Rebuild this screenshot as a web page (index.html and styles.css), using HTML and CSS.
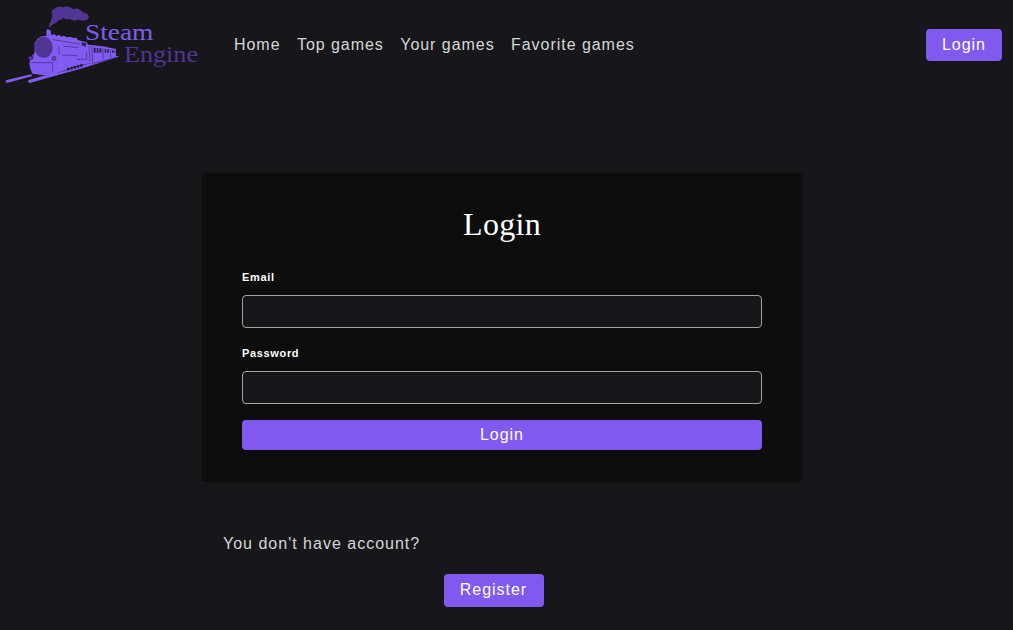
FILE: index.html
```html
<!DOCTYPE html>
<html lang="en">
<head>
<meta charset="utf-8">
<title>Steam Engine - Login</title>
<link rel="stylesheet" href="styles.css">
</head>
<body>
<header class="header">
  <a class="logo" href="#" aria-label="Steam Engine">
    <svg width="210" height="90" viewBox="0 0 630 270">
      <path class="dark" d="M147 83L148 72L153 62L157 45L154 38L158 29L168 23L177 20L190 22L198 19L211 22L220 28L230 25L240 29L250 37L262 42L267 50L261 59L249 62L235 59L222 62L211 57L198 58L190 54L184 59L176 60L169 68L159 73Z"/>
      <path class="light" d="M17 241L93 223L98 228L34 245L19 249ZM84 241L130 227L163 222L240 198L356 167L356 170L250 204L150 232L87 250Z"/>
      <path class="light" d="M88 191L90 181L98 178L97 165L104 159L104 130L112 116L125 109L139 108V91L142 88L152 91L154 106L163 102L169 108L177 104L184 110L192 107L200 112L211 110L220 114L230 113L233 120L246 123L259 127L265 134L308 139L348 147V172L320 179L275 190L246 194L204 207L165 222L150 228L97 221L91 206Z"/>
      <ellipse class="dark" cx="131" cy="142" rx="27" ry="32"/>
      <path class="detail" d="M158 119L240 132M177 140V165M187 165L232 167M190 139L235 142M260 157V178H230M267 139L270 186M94 188H158V193M158 194V217M101 164L98 180M275 139L278 185M309 145V178M332 148V173"/>
      <circle class="lamp" cx="162" cy="175" r="6"/>
      <circle class="lamp" cx="91" cy="174" r="5"/>
      <path class="cut" d="M245 127L258 130V140L245 136ZM281 143H287V158H281ZM290 144H295V158H290ZM298 145H304V158H298ZM314 147H319V158H314ZM322 148H327V158H322ZM336 150H340V159H336ZM343 151H346V159H343Z"/>
      <path class="wheels" d="M202 208L247 196"/>
      <path class="undercarriage" d="M275 191L348 173"/>
      <text class="word light" x="255" y="119" textLength="205" lengthAdjust="spacingAndGlyphs">Steam</text>
      <text class="word dark" x="372" y="186" textLength="222" lengthAdjust="spacingAndGlyphs">Engine</text>
    </svg>
  </a>
  <nav class="nav">
    <a href="#">Home</a>
    <a href="#">Top games</a>
    <a href="#">Your games</a>
    <a href="#">Favorite games</a>
  </nav>
  <a class="button header-login" href="#">Login</a>
</header>
<main class="main">
  <form class="card">
    <h1 class="title">Login</h1>
    <label class="label" for="email">Email</label>
    <input class="input" id="email" type="email">
    <label class="label" for="password">Password</label>
    <input class="input" id="password" type="password">
    <button class="button submit" type="button">Login</button>
  </form>
  <section class="signup">
    <p class="question">You don't have account?</p>
    <a class="button register" href="#">Register</a>
  </section>
</main>
</body>
</html>
```
FILE: styles.css
```css
* { box-sizing: border-box; }
body {
  margin: 0;
  background: #17161a;
  color: #d6d6d6;
  font: 16px/20px "Liberation Sans", Arial, sans-serif;
  letter-spacing: 0.96px;
}
a { color: inherit; text-decoration: none; }
.header { display: flex; align-items: center; height: 90px; padding-right: 11px; }
.logo { width: 210px; height: 90px; }
.logo svg { display: block; }
.light { fill: #825cf0; }
.dark { fill: #503594; }
.detail { fill: none; stroke: #4a3290; stroke-width: 2.5; }
.lamp { fill: #6546bd; stroke: #38266b; stroke-width: 2; }
.cut { fill: #2f2258; }
.wheels { fill: none; stroke: #241b3d; stroke-width: 8; stroke-dasharray: 7 3; }
.undercarriage { fill: none; stroke: #38266b; stroke-width: 2; }
.word { font: 72px "Liberation Serif", serif; letter-spacing: 0; }
.nav { display: flex; gap: 16.4px; padding-left: 24px; }
.button {
  display: block;
  border: 0;
  border-radius: 4px;
  background: #805aef;
  color: #fff;
  font: inherit;
  letter-spacing: 0.96px;
  text-align: center;
}
.header-login { width: 76px; height: 32px; margin-left: auto; padding-top: 6px; }
.main { padding-top: 83px; }
.card {
  display: flex;
  flex-direction: column;
  width: 600px;
  height: 309px;
  margin-left: 202px;
  padding: 31px 40px 32px;
  border-radius: 4px;
  background: #0d0d0e;
  box-shadow: 0 0 4px #141416;
}
.title {
  margin: 0 0 24px;
  color: #fff;
  font: 32px/40px "Liberation Serif", serif;
  letter-spacing: 0.3px;
  text-align: center;
}
.label { height: 27px; color: #fff; font-size: 11px; font-weight: 700; line-height: 18px; letter-spacing: 0.66px; }
.input {
  height: 33px;
  margin: 0 0 16px;
  padding: 0 8px;
  border: 1px solid #a3a3a3;
  border-radius: 4px;
  background: #17161a;
  color: #fff;
  font: inherit;
}
.submit { height: 30px; padding: 0; }
.signup { width: 541px; margin: 52px 0 0 223px; }
.question { margin: 0 0 20px; letter-spacing: 1px; }
.register { width: 100px; height: 33px; margin: 0 auto; padding-top: 6px; }
```
